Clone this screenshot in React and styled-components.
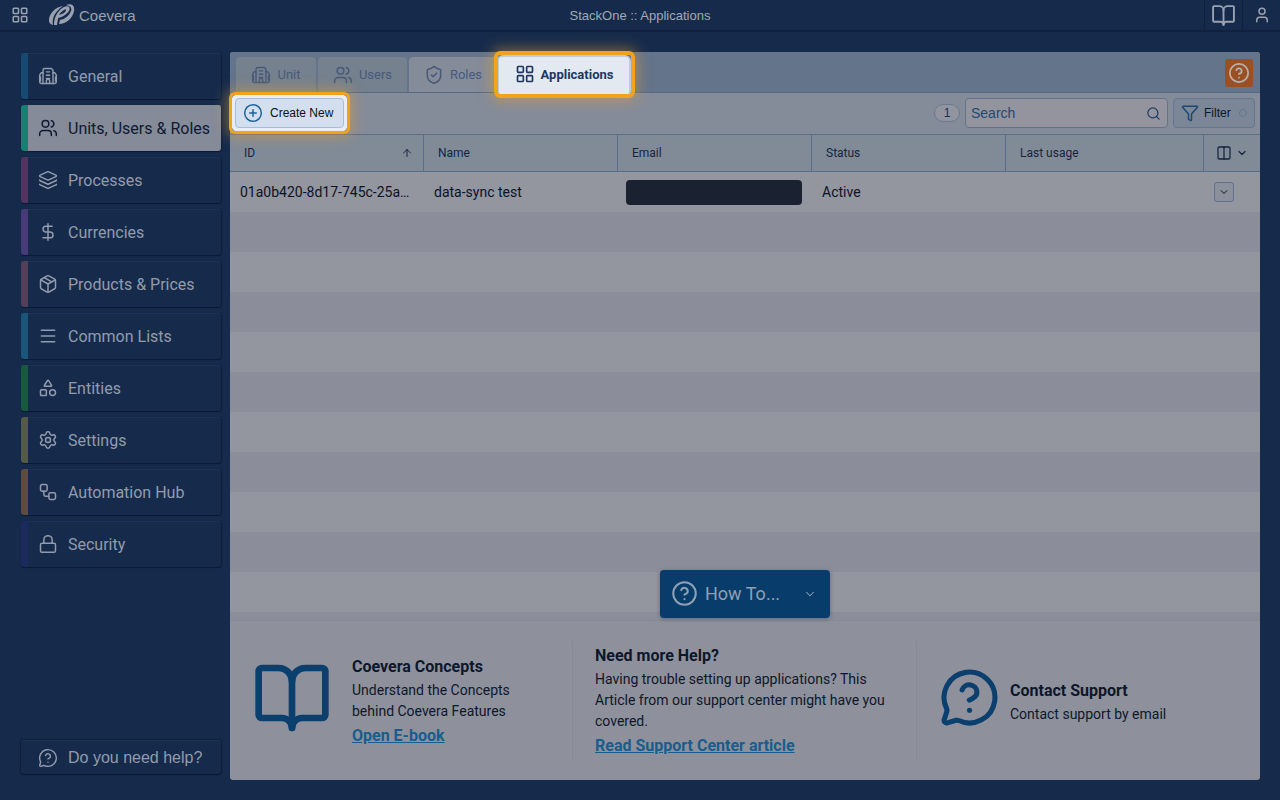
import React from "react";
import styled, { createGlobalStyle, css } from "styled-components";
import {
  LayoutGrid, BookOpen, User, Users, Layers, DollarSign, Package, Menu, Shapes, Settings,
  Lock, MessageCircleQuestionMark, ShieldCheck, CirclePlus, Search, Funnel, Columns2,
  ChevronDown, ArrowUp, CircleQuestionMark, Workflow,
} from "lucide-react";

const Global = createGlobalStyle`
  *, *::before, *::after { box-sizing: border-box; }
  body { margin: 0; background: #162b4c; font-family: Roboto, sans-serif; color: #0d172b; }
  button, input { font: inherit; color: inherit; }
  h3, p { margin: 0; }
`;

const sans = css`font-family: "Liberation Sans", Arial, sans-serif;`;

const Page = styled.div`
  min-height: 100vh;
  display: flex;
  flex-direction: column;
`;

const TopBar = styled.header`
  height: 32px;
  display: grid;
  grid-template-columns: 1fr auto 1fr;
  align-items: center;
  border-bottom: 2px solid #10213d;
  color: #9aa1af;
`;

const BarGroup = styled.div`
  height: 100%;
  display: flex;
  align-items: center;
  justify-content: ${(p) => (p.$end ? "flex-end" : "flex-start")};
`;

const BarButton = styled.button`
  height: 100%;
  width: ${(p) => p.$width}px;
  padding: 0;
  border: 0;
  border-left: ${(p) => (p.$divided ? "1px solid #10213d" : "0")};
  background: none;
  display: flex;
  align-items: center;
  justify-content: center;
`;

const Brand = styled.a`
  display: flex;
  align-items: center;
  gap: 4px;
  margin-left: 10px;
  color: inherit;
  text-decoration: none;
  font-size: 15px;
  ${sans}
`;

const Title = styled.div`
  font-size: 13px;
  color: #a3a8b3;
  ${sans}
`;

const Body = styled.div`
  flex: 1;
  display: flex;
  padding: 20px 20px 20px 21px;
  gap: 9px;
`;

const Sidebar = styled.nav`
  width: 200px;
  flex: none;
  display: flex;
  flex-direction: column;
  gap: 6px;
  padding: 1px 0 6px;
`;

const NavItem = styled.a`
  height: 46px;
  display: flex;
  align-items: center;
  gap: 10px;
  padding-left: 10px;
  border-left: 7px solid ${(p) => p.$accent};
  border-radius: 3px;
  background: ${(p) => (p.$active ? "#858b99" : "#162b4c")};
  color: ${(p) => (p.$active ? "#0f1a33" : "#939bab")};
  box-shadow: 0 1px 1px #0b1932, 1px 0 1px #10203b, inset 0 1px 0 ${(p) => (p.$active ? "#858b99" : "#1d3354")};
  text-decoration: none;
  font-size: 16px;
  white-space: nowrap;
`;

const HelpButton = styled.button`
  height: 34px;
  margin-top: auto;
  display: flex;
  align-items: center;
  gap: 10px;
  padding: 1px 0 0 17px;
  border: 0;
  border-radius: 3px;
  background: #162b4c;
  box-shadow: 0 1px 1px #0b1932, 0 0 1px 1px #10203b, inset 0 1px 0 #1d3354;
  color: #939bab;
  font-size: 16px;
  ${sans}
`;

const Panel = styled.main`
  flex: 1;
  min-width: 0;
  display: flex;
  flex-direction: column;
  background: #8e919c;
  border-radius: 3px;
`;

const TabBar = styled.div`
  height: 41px;
  flex: none;
  display: flex;
  align-items: flex-end;
  gap: 2px;
  padding: 0 7px 0 6px;
  background: #64748b;
  border-bottom: 1px solid #556a87;
  border-radius: 3px 3px 0 0;
`;

const Tab = styled.button`
  height: 35px;
  width: ${(p) => p.$width}px;
  display: flex;
  align-items: center;
  justify-content: center;
  gap: 6px;
  padding: 0;
  border: 0;
  border-radius: 4px 4px 0 0;
  background: ${(p) => (p.$open ? "#848b99" : "#75818f")};
  color: #48597a;
  font-size: 13px;
`;

const ring = css`
  position: relative;
  z-index: 1;
  &::after {
    content: "";
    position: absolute;
    border: 3px solid #f0a31c;
    border-radius: 6px;
    box-shadow: 0 0 14px 2px rgba(235, 160, 40, 0.5);
    pointer-events: none;
  }
`;

const ActiveTab = styled(Tab)`
  ${ring}
  height: 38px;
  margin-bottom: -3px;
  padding-bottom: 4px;
  background: #e3e9f1;
  color: #1d375f;
  font-weight: 700;
  border-radius: 4px;
  box-shadow: 0 0 0 2px #bccbdd;
  &::after { inset: -6px -6px -3px -5px; border-width: 4px; }
`;

const HelpBadge = styled.button`
  width: 28px;
  height: 28px;
  margin: 0 0 5px auto;
  display: flex;
  align-items: center;
  justify-content: center;
  padding: 0;
  border: 0;
  border-radius: 3px;
  background: #9b5023;
  color: #b9afab;
`;

const Toolbar = styled.div`
  height: 41px;
  flex: none;
  display: flex;
  align-items: center;
  gap: 5px;
  padding: 0 5px 1px;
  background: #858c99;
`;

const CreateButton = styled.button`
  ${ring}
  ${sans}
  width: 109px;
  height: 30px;
  display: flex;
  align-items: center;
  gap: 7px;
  padding: 0 0 0 7px;
  border: 1px solid #a4bfdd;
  border-radius: 4px;
  background: #d3dfee;
  box-shadow: 0 0 0 4px #e9edf3;
  color: #0c0f16;
  font-size: 12px;
  white-space: nowrap;
  &::after { inset: -7px; }
`;

const Count = styled.span`
  ${sans}
  width: 26px;
  height: 18px;
  margin-left: auto;
  border: 1px solid #6c7a91;
  border-radius: 9px;
  background: #92949f;
  color: #1b3356;
  font-size: 12px;
  line-height: 16px;
  text-align: center;
`;

const SearchBox = styled.label`
  width: 203px;
  height: 30px;
  display: flex;
  align-items: center;
  padding: 0 6px 0 5px;
  border: 1px solid #64748d;
  border-radius: 4px;
  background: #93949e;
  color: #1d3d67;
`;

const SearchInput = styled.input`
  ${sans}
  flex: 1;
  min-width: 0;
  padding: 0;
  border: 0;
  outline: 0;
  background: none;
  font-size: 14px;
  &::placeholder { color: #234872; opacity: 1; }
`;

const FilterButton = styled.button`
  ${sans}
  width: 82px;
  height: 30px;
  display: flex;
  align-items: center;
  gap: 5px;
  padding: 0 7px;
  border: 1px solid #66768f;
  border-radius: 4px;
  background: #7b8797;
  color: #0c1629;
  font-size: 12px;
`;

const Dot = styled.span`
  width: 8px;
  height: 8px;
  margin-left: auto;
  border: 1px solid #66768c;
  border-radius: 50%;
`;

const Grid = styled.div`
  position: relative;
  flex: 1;
  background: repeating-linear-gradient(#93959f 0 40px, #8b8e9a 40px 80px) 0 38px;
`;

const Table = styled.table`
  width: 100%;
  table-layout: fixed;
  border-collapse: separate;
  border-spacing: 0;
`;

const Th = styled.th`
  height: 38px;
  width: ${(p) => (p.$width ? `${p.$width}px` : "auto")};
  padding: 0 10px 0 14px;
  border: solid #596e8c;
  border-width: 1px 1px 1px 0;
  background: #818b98;
  color: #15253f;
  font-size: 12px;
  font-weight: 400;
  text-align: left;
  &:last-child { border-right: 0; padding: 0 12px; }
`;

const ThInner = styled.div`
  display: flex;
  align-items: center;
  justify-content: space-between;
`;

const ColumnButton = styled.button`
  display: flex;
  align-items: center;
  gap: 4px;
  padding: 0;
  border: 0;
  background: none;
`;

const Td = styled.td`
  height: 40px;
  padding: 0 10px;
  color: #0c1425;
  font-size: 14px;
  white-space: nowrap;
`;

const Redacted = styled.div`
  height: 25px;
  margin-left: -2px;
  border-radius: 4px;
  background: #1a2232;
`;

const RowMenu = styled.button`
  width: 20px;
  height: 20px;
  display: flex;
  align-items: center;
  justify-content: center;
  padding: 0;
  border: 1px solid #5f7190;
  border-radius: 3px;
  background: #8b909c;
`;

const HowTo = styled.button`
  position: absolute;
  left: 50%;
  bottom: 2px;
  transform: translateX(-50%);
  width: 170px;
  height: 48px;
  display: flex;
  align-items: center;
  gap: 7px;
  padding: 0 13px 1px 11px;
  border: 0;
  border-radius: 4px;
  background: #083c6a;
  box-shadow: 0 1px 4px rgba(15, 30, 60, 0.35);
  color: #8fa0b5;
  font-size: 18px;
  svg:last-child { margin-left: auto; }
`;

const Footer = styled.footer`
  flex: none;
  height: 160px;
  display: grid;
  grid-template-columns: 343fr 344fr 343fr;
  align-items: center;
  border-top: 1px solid #868a96;
`;

const HelpCard = styled.section`
  height: 120px;
  display: flex;
  align-items: center;
  gap: ${(p) => p.$gap}px;
  padding: 2px 22px 0;
  border-right: 1px solid #868a96;
  color: #0d172b;
  &:last-child { border-right: 0; }
  > svg { flex: none; margin-bottom: 8px; color: #0b3f6d; }
`;

const CardTitle = styled.h3`
  font-size: 16px;
  font-weight: 700;
  line-height: 26px;
`;

const CardText = styled.p`
  font-size: 14px;
  line-height: 21px;
`;

const CardLink = styled.a`
  display: block;
  color: #175d8e;
  font-size: 16px;
  font-weight: 700;
  line-height: 28px;
`;

function BuildingIcon({ size = 20 }) {
  return (
    <svg width={size} height={size} viewBox="0 0 24 24" fill="none" stroke="currentColor" strokeWidth="1.7" strokeLinecap="round" strokeLinejoin="round" aria-hidden="true">
      <path d="M6 21V5a2 2 0 0 1 2-2h8l2 2v16" />
      <path d="M6 8H4l-2 3v8a2 2 0 0 0 2 2h16a2 2 0 0 0 2-2v-8l-2-3h-2" />
      <path d="M10 7h4M10 11h4M10 15h4M10 21v-3a2 2 0 0 1 4 0v3M3 13v5M21 13v5" />
    </svg>
  );
}

function LogoMark() {
  return (
    <svg width="26" height="22" viewBox="0 0 26 22" fill="currentColor" aria-hidden="true">
      <path d="M14 2C6 3 0 10 0 16c0 3 1 4 4 5-1-5 0-12 10-19z" />
      <path d="M5 21C5 13 9 6 15 3c4-2 7 0 5 4-2 3-6 6-11 7 0 2-1 5-1 7zM10 11c4-1 7-3 7-5 0-1-1-1-2 0-2 1-4 3-5 5z" fillRule="evenodd" />
      <path d="M17 1c6-2 9 1 8 6-1 7-8 13-15 13l1-4c5-1 9-4 11-9 1-3 0-5-5-6z" />
    </svg>
  );
}

const navItems = [
  { label: "General", icon: BuildingIcon, accent: "#174a73" },
  { label: "Units, Users & Roles", icon: Users, accent: "#168071", active: true },
  { label: "Processes", icon: Layers, accent: "#523460" },
  { label: "Currencies", icon: DollarSign, accent: "#493a79" },
  { label: "Products & Prices", icon: Package, accent: "#543f59" },
  { label: "Common Lists", icon: Menu, accent: "#1a557a" },
  { label: "Entities", icon: Shapes, accent: "#175a3e" },
  { label: "Settings", icon: Settings, accent: "#555a48" },
  { label: "Automation Hub", icon: Workflow, accent: "#5f4c40" },
  { label: "Security", icon: Lock, accent: "#1a2a5c" },
];

export default function App() {
  return (
    <Page>
      <Global />
      <TopBar>
        <BarGroup>
          <BarButton $width={39} aria-label="Apps"><LayoutGrid size={18} strokeWidth={2} /></BarButton>
          <Brand href="#"><LogoMark />Coevera</Brand>
        </BarGroup>
        <Title>StackOne :: Applications</Title>
        <BarGroup $end>
          <BarButton $width={38} $divided aria-label="Guides"><BookOpen size={25} strokeWidth={1.8} /></BarButton>
          <BarButton $width={38} $divided aria-label="Account"><User size={18} strokeWidth={2} /></BarButton>
        </BarGroup>
      </TopBar>
      <Body>
        <Sidebar>
          {navItems.map(({ label, icon: Icon, accent, active }) => (
            <NavItem key={label} href="#" $accent={accent} $active={active}>
              <Icon size={20} strokeWidth={1.8} />
              {label}
            </NavItem>
          ))}
          <HelpButton><MessageCircleQuestionMark size={20} strokeWidth={1.7} />Do you need help?</HelpButton>
        </Sidebar>
        <Panel>
          <TabBar>
            <Tab $width={80}><BuildingIcon />Unit</Tab>
            <Tab $width={89}><Users size={20} strokeWidth={1.8} />Users</Tab>
            <Tab $width={88} $open><ShieldCheck size={20} strokeWidth={1.8} />Roles</Tab>
            <ActiveTab $width={130}><LayoutGrid size={20} strokeWidth={2} />Applications</ActiveTab>
            <HelpBadge aria-label="Help"><CircleQuestionMark size={22} strokeWidth={1.9} /></HelpBadge>
          </TabBar>
          <Toolbar>
            <CreateButton><CirclePlus size={20} strokeWidth={1.8} color="#20639a" />Create New</CreateButton>
            <Count>1</Count>
            <SearchBox>
              <SearchInput placeholder="Search" aria-label="Search" />
              <Search size={15} strokeWidth={2} />
            </SearchBox>
            <FilterButton><Funnel size={18} strokeWidth={2} color="#1d4675" />Filter<Dot /></FilterButton>
          </Toolbar>
          <Grid>
            <Table>
              <thead>
                <tr>
                  <Th><ThInner>ID<ArrowUp size={12} strokeWidth={2} /></ThInner></Th>
                  <Th>Name</Th>
                  <Th>Email</Th>
                  <Th>Status</Th>
                  <Th $width={198}>Last usage</Th>
                  <Th $width={56}>
                    <ColumnButton aria-label="Columns"><Columns2 size={16} strokeWidth={1.9} /><ChevronDown size={12} strokeWidth={2.4} /></ColumnButton>
                  </Th>
                </tr>
              </thead>
              <tbody>
                <tr>
                  <Td>01a0b420-8d17-745c-25a…</Td>
                  <Td>data-sync test</Td>
                  <Td><Redacted /></Td>
                  <Td>Active</Td>
                  <Td />
                  <Td><RowMenu aria-label="Row actions"><ChevronDown size={12} strokeWidth={2} /></RowMenu></Td>
                </tr>
              </tbody>
            </Table>
            <HowTo><CircleQuestionMark size={27} strokeWidth={1.8} />How To...<ChevronDown size={14} strokeWidth={1.8} /></HowTo>
          </Grid>
          <Footer>
            <HelpCard $gap={20}>
              <BookOpen size={80} strokeWidth={2} />
              <div>
                <CardTitle>Coevera Concepts</CardTitle>
                <CardText>Understand the Concepts behind Coevera Features</CardText>
                <CardLink href="#">Open E-book</CardLink>
              </div>
            </HelpCard>
            <HelpCard>
              <div>
                <CardTitle>Need more Help?</CardTitle>
                <CardText>Having trouble setting up applications? This Article from our support center might have you covered.</CardText>
                <CardLink href="#">Read Support Center article</CardLink>
              </div>
            </HelpCard>
            <HelpCard $gap={10}>
              <MessageCircleQuestionMark size={61} strokeWidth={2} />
              <div>
                <CardTitle>Contact Support</CardTitle>
                <CardText>Contact support by email</CardText>
              </div>
            </HelpCard>
          </Footer>
        </Panel>
      </Body>
    </Page>
  );
}
